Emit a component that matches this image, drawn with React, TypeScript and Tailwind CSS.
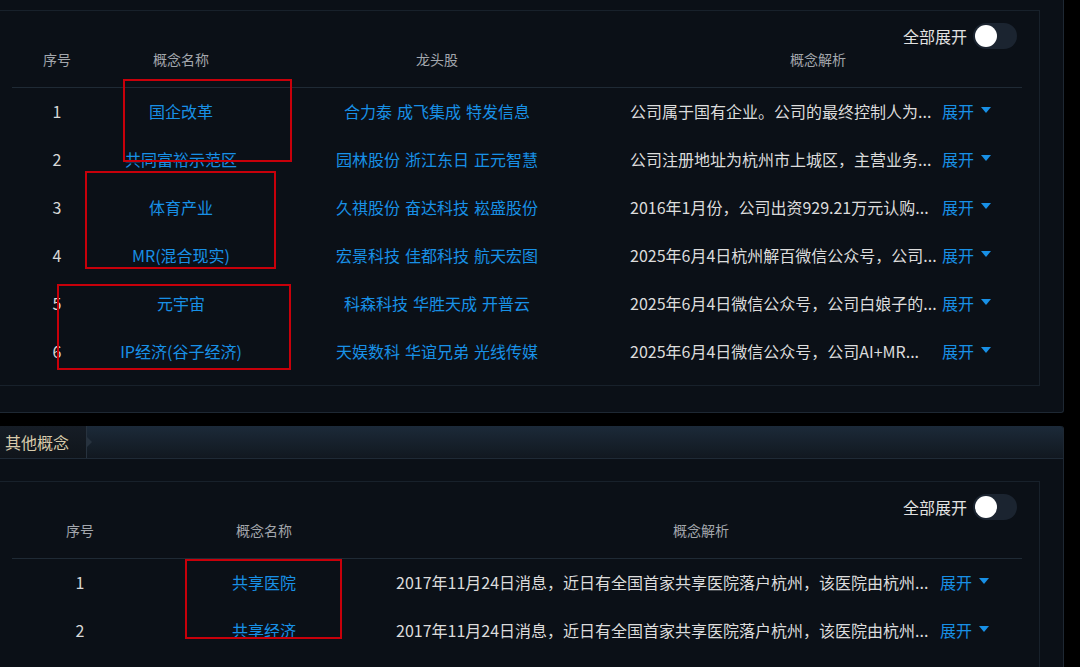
import React from "react";

type TopRow = { n: number; name: string; stocks: string[]; text: string };

const topRows: TopRow[] = [
  { n: 1, name: "国企改革", stocks: ["合力泰", "成飞集成", "特发信息"], text: "公司属于国有企业。公司的最终控制人为..." },
  { n: 2, name: "共同富裕示范区", stocks: ["园林股份", "浙江东日", "正元智慧"], text: "公司注册地址为杭州市上城区，主营业务..." },
  { n: 3, name: "体育产业", stocks: ["久祺股份", "奋达科技", "崧盛股份"], text: "2016年1月份，公司出资929.21万元认购..." },
  { n: 4, name: "MR(混合现实)", stocks: ["宏景科技", "佳都科技", "航天宏图"], text: "2025年6月4日杭州解百微信公众号，公司..." },
  { n: 5, name: "元宇宙", stocks: ["科森科技", "华胜天成", "开普云"], text: "2025年6月4日微信公众号，公司白娘子的..." },
  { n: 6, name: "IP经济(谷子经济)", stocks: ["天娱数科", "华谊兄弟", "光线传媒"], text: "2025年6月4日微信公众号，公司AI+MR..." },
];

const otherRows = [
  { n: 1, name: "共享医院", text: "2017年11月24日消息，近日有全国首家共享医院落户杭州，该医院由杭州..." },
  { n: 2, name: "共享经济", text: "2017年11月24日消息，近日有全国首家共享医院落户杭州，该医院由杭州..." },
];

const Toggle = () => (
  <div className="flex h-[26px] items-center justify-end pr-[22px] mt-[12px]">
    <span className="text-[16px] leading-[20px] text-[#e2e2e2] mr-[6px]">全部展开</span>
    <div className="w-[44px] h-[26px] rounded-full bg-[#1b2430] flex items-center px-[2px]">
      <div className="w-[22px] h-[22px] rounded-full bg-white" />
    </div>
  </div>
);

const Expand = () => (
  <div className="flex items-center shrink-0">
    <span className="text-[16px] leading-[20px] text-[#1890e6]">展开</span>
    <span className="ml-[7px] mb-[3px] w-0 h-0 border-l-[5px] border-r-[5px] border-t-[6px] border-l-transparent border-r-transparent border-t-[#1890e6]" />
  </div>
);

export default function App() {
  return (
    <div className="relative w-[1080px] h-[667px] overflow-hidden bg-black font-['Noto_Sans_CJK_SC',sans-serif]">
      {/* 概念 panel */}
      <div className="w-[1064px] h-[413px] bg-[#0b1017] border-r border-b border-[#1e2833] rounded-br-[3px] pt-[10px]">
        <div className="w-[1040px] h-[376px] border-t border-r border-b border-[#18212b]">
          <Toggle />
          <div className="ml-[12px] w-[1010px] h-[39px] border-b border-[#1f2a35] flex text-[14px] leading-[20px] text-[#a3a7ad]">
            <div className="w-[90px] text-center">序号</div>
            <div className="w-[158px] text-center">概念名称</div>
            <div className="w-[354px] text-center">龙头股</div>
            <div className="w-[408px] text-center">概念解析</div>
          </div>
          {topRows.map((r) => (
            <div key={r.n} className="ml-[12px] w-[1010px] h-[48px] pb-[2px] flex items-center text-[16px] leading-[20px]">
              <div className="w-[90px] text-center text-[#d8d8d8]">{r.n}</div>
              <div className="w-[158px] text-center text-[#1890e6] whitespace-nowrap">{r.name}</div>
              <div className="w-[354px] flex justify-center gap-[5px] text-[#1890e6] whitespace-nowrap">
                {r.stocks.map((s) => (
                  <span key={s}>{s}</span>
                ))}
              </div>
              <div className="w-[408px] flex items-center pl-[16px]">
                <div className="min-w-[312px] whitespace-nowrap text-[#dcdcdc]">{r.text}</div>
                <Expand />
              </div>
            </div>
          ))}
        </div>
      </div>

      {/* 其他概念 panel */}
      <div className="mt-[13px] w-[1064px] h-[241px] bg-[#0b1017] border-r border-[#1e2833] rounded-tr-[3px]">
        <div className="h-[33px] flex bg-linear-to-b from-[#1c2a39] to-[#111820] border-b border-[#1f2a36] rounded-tr-[3px]">
          <div className="relative w-[87px] h-full bg-linear-to-b from-[#161d26] to-[#10151b] border-r border-[#27323e] flex items-center pl-[5px]">
            <span className="text-[16px] leading-[20px] text-[#d8cbab]">其他概念</span>
            <span className="absolute right-[-6px] top-[11px] w-0 h-0 border-t-[5px] border-b-[5px] border-l-[5px] border-t-transparent border-b-transparent border-l-[#27323e]" />
          </div>
        </div>
        <div className="mt-[22px] w-[1040px] h-[186px] border-t border-r border-[#18212b]">
          <Toggle />
          <div className="ml-[12px] w-[1010px] h-[39px] border-b border-[#1f2a35] flex text-[14px] leading-[20px] text-[#a3a7ad]">
            <div className="w-[136px] text-center">序号</div>
            <div className="w-[232px] text-center">概念名称</div>
            <div className="w-[642px] text-center">概念解析</div>
          </div>
          {otherRows.map((r) => (
            <div key={r.n} className="ml-[12px] w-[1010px] h-[48px] pb-[2px] flex items-center text-[16px] leading-[20px]">
              <div className="w-[136px] text-center text-[#d8d8d8]">{r.n}</div>
              <div className="w-[232px] text-center text-[#1890e6]">{r.name}</div>
              <div className="w-[642px] flex items-center pl-[16px]">
                <div className="min-w-[544px] whitespace-nowrap text-[#dcdcdc]">{r.text}</div>
                <Expand />
              </div>
            </div>
          ))}
        </div>
      </div>

      {/* red annotation boxes */}
      <div className="absolute left-[123px] top-[79px] w-[169px] h-[83px] border-2 border-[#c8000a]" />
      <div className="absolute left-[85px] top-[171px] w-[191px] h-[98px] border-2 border-[#c8000a]" />
      <div className="absolute left-[57px] top-[284px] w-[234px] h-[86px] border-2 border-[#c8000a]" />
      <div className="absolute left-[185px] top-[559px] w-[157px] h-[80px] border-2 border-[#c8000a]" />
    </div>
  );
}
